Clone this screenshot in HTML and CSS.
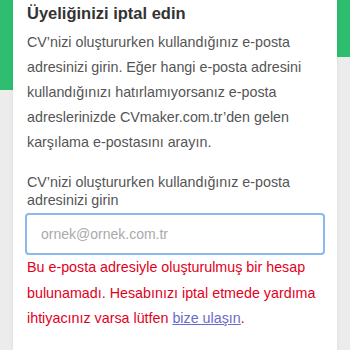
FILE: index.html
```html
<!DOCTYPE html>
<html lang="tr">
<head>
<meta charset="utf-8">
<link rel="stylesheet" href="styles.css">
</head>
<body>
<div class="page">
  <div class="side side-left"><div class="green green-left"></div></div>
  <main class="card">
    <h1 class="title">Üyeliğinizi iptal edin</h1>
    <p class="intro">CV’nizi oluştururken kullandığınız e-posta adresinizi girin. Eğer hangi e-posta adresini kullandığınızı hatırlamıyorsanız e-posta adreslerinizde CVmaker.com.tr’den gelen karşılama e-postasını arayın.</p>
    <label class="label" for="email">CV’nizi oluştururken kullandığınız e-posta adresinizi girin</label>
    <input class="input" id="email" type="email" placeholder="ornek@ornek.com.tr">
    <p class="error">Bu e-posta adresiyle oluşturulmuş bir hesap bulunamadı. Hesabınızı iptal etmede yardıma ihtiyacınız varsa lütfen <a class="link" href="#">bize ulaşın</a>.</p>
  </main>
  <div class="side side-right"><div class="green green-right"></div></div>
</div>
</body>
</html>
```
FILE: styles.css
```css
html, body {
  margin: 0;
  padding: 0;
  height: 100%;
  background: #ececec;
  font-family: "Liberation Sans", Arial, sans-serif;
}
.page {
  display: grid;
  grid-template-columns: 13px 1fr 13px;
  height: 350px;
  overflow: hidden;
}
.side {
  background: #ececec;
}
.green {
  background: #2fbd70;
}
.green-left { height: 90px; }
.green-right { height: 57px; }
.card {
  background: #fff;
  box-shadow: 0 0 4px rgba(0,0,0,0.08);
  padding: 3px 10px 0 14px;
  position: relative;
  z-index: 1;
}
.title {
  margin: 0;
  font-size: 16.5px;
  font-weight: bold;
  color: #333;
  line-height: 20px;
}
.intro {
  margin: 7px 0 0 0;
  font-size: 14.3px;
  line-height: 25px;
  color: #555;
}
.label {
  display: block;
  margin-top: 18px;
  font-size: 14.3px;
  line-height: 18px;
  color: #555;
}
.input {
  display: block;
  box-sizing: border-box;
  width: 300px;
  height: 42px;
  margin: 4px 0 0 -2px;
  padding: 0 14px;
  border: 2px solid #8ab8ef;
  border-radius: 4px;
  font-family: inherit;
  font-size: 14px;
  color: #333;
  outline: none;
}
.input::placeholder {
  color: #aaa;
}
.error {
  margin: 0;
  padding-top: 0;
  font-size: 14.3px;
  line-height: 25.5px;
  color: #e3001b;
}
.link {
  color: #6a6acb;
  text-decoration: underline;
}
```
